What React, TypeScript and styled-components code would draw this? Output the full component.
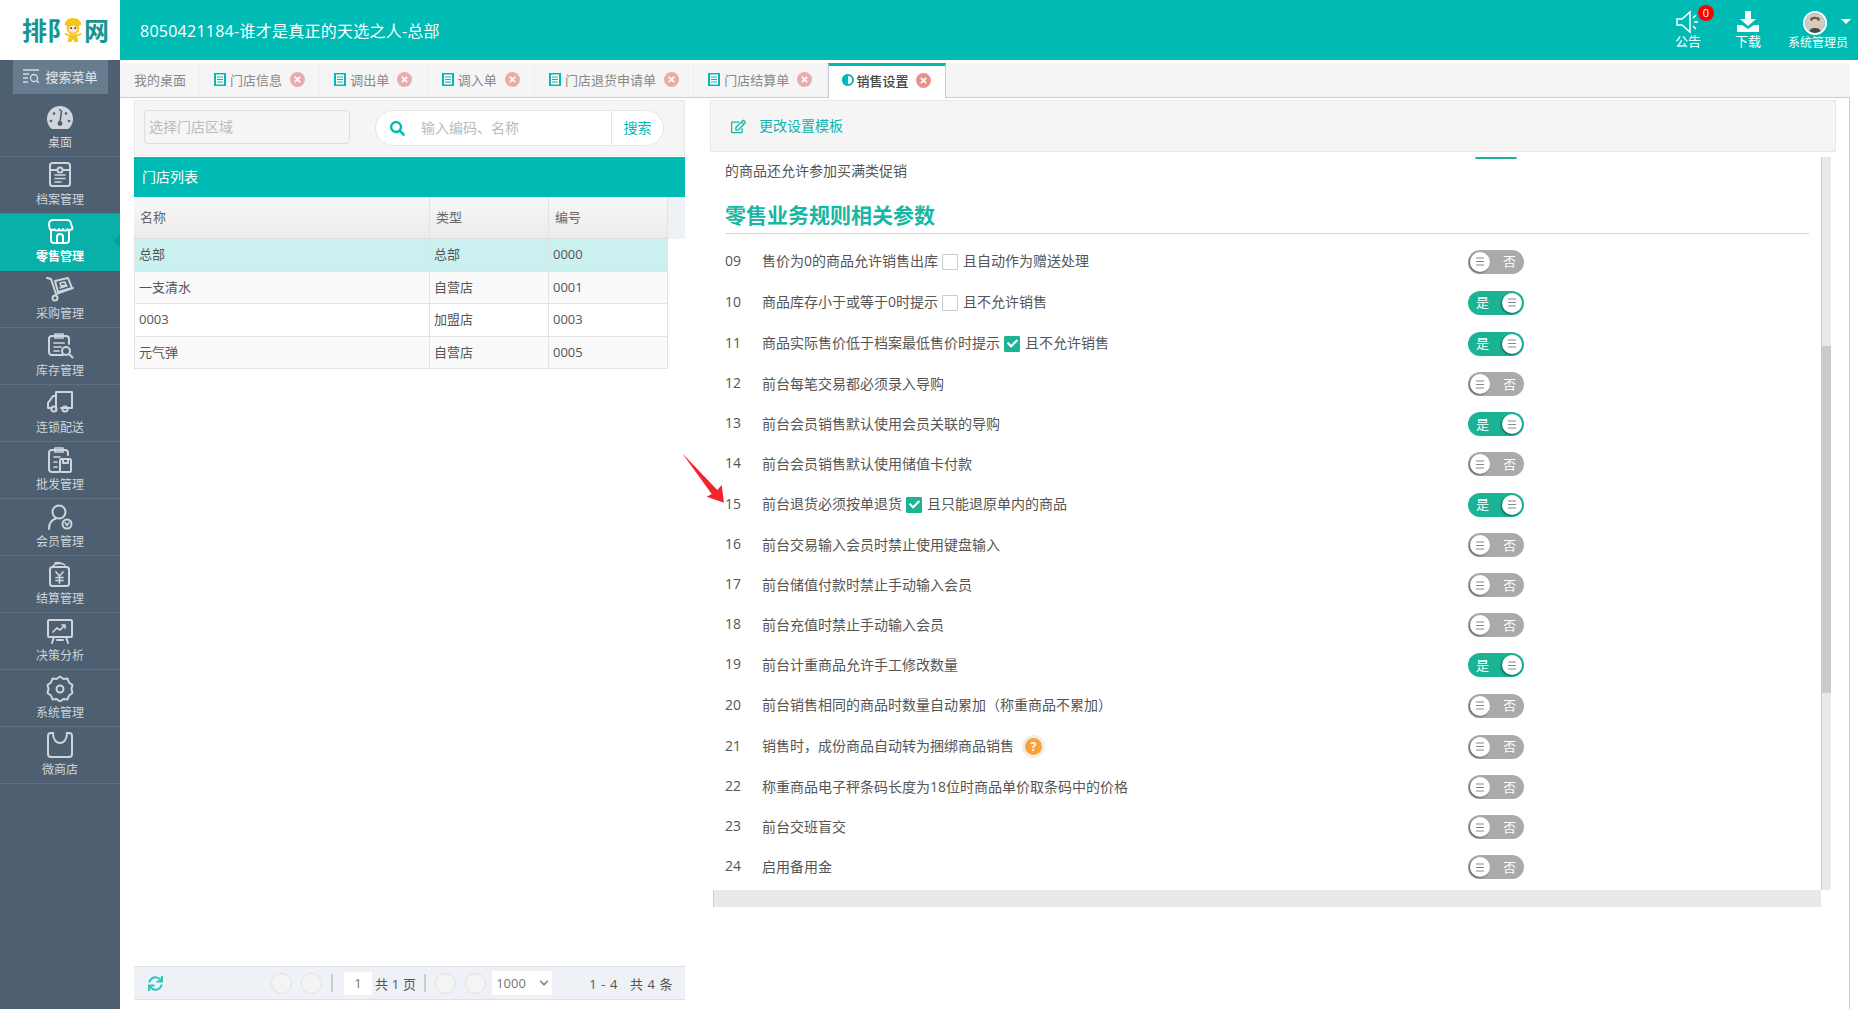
import React from 'react';
import styled, { createGlobalStyle } from 'styled-components';
import { FaCheck, FaRegEdit, FaSearch, FaSync, FaTimes } from 'react-icons/fa';
import { ChevronDown } from 'lucide-react';

const TEAL = '#00bbb4';
const GREEN = '#1ab394';
const FONT = `"Open Sans", "Noto Sans CJK SC", sans-serif`;

const navIcons: Record<string, React.ReactNode> = {
  desk: (
    <>
      <path d="M5.7 24A13 13 0 1 1 22.3 24z" fill="currentColor" stroke="none" />
      <path d="M15.5 6l-1.500 11" stroke="#4d5f70" strokeWidth="1.6" />
      <circle cx="14" cy="18.5" r="2.4" fill="#4d5f70" stroke="none" />
      <g fill="#4d5f70" stroke="none">
        <circle cx="5" cy="16" r="1.3" /><circle cx="8" cy="8.5" r="1.3" /><circle cx="14" cy="5" r="1" /><circle cx="23" cy="16" r="1.3" /><circle cx="20" cy="8.5" r="1.3" />
      </g>
    </>
  ),
  file: (
    <>
      <rect x="4" y="1" width="20" height="23" rx="2.5" />
      <path d="M4 8h7M17 8h7" /><circle cx="14" cy="8" r="2.6" />
      <path d="M9 13h10M9 16.5h10M9 20h6" strokeWidth="1.6" />
    </>
  ),
  shop: (
    <>
      <path d="M7 1h14a4 4 0 0 1 4 4l1.500 4c0 2-5 3-5 1 0 2-4.500 2-4.500 0 0 2-4 2-4 0 0 2-4.500 2-4.500 0 0 2-5 1-5-1L3 5a4 4 0 0 1 4-4z" />
      <path d="M5 12v9a3 3 0 0 0 3 3h12a3 3 0 0 0 3-3v-9" />
      <path d="M11 24v-6a3 3 0 0 1 6 0v6" />
    </>
  ),
  buy: (
    <>
      <path d="M1 2l4 1 5 15 17-6" /><circle cx="9" cy="22" r="2.5" />
      <path d="M9 5l13-3 4 10-14 4z" /><path d="M14 7l5-1 1 3-5 1zM14 12l7-2" strokeWidth="1.6" />
    </>
  ),
  stock: (
    <>
      <path d="M17 22H6a3 3 0 0 1-3-3V6a3 3 0 0 1 3-3h14a3 3 0 0 1 3 3v5" />
      <path d="M9 1h8v4H9zM8 10h10M8 14h7M8 18h5" strokeWidth="1.7" />
      <circle cx="20" cy="18" r="4" /><path d="M23 21l3.500 3.500" />
    </>
  ),
  truck: (
    <>
      <path d="M10 19V2h16v15" /><path d="M26 18H15" />
      <path d="M10 6H7L2 13v5h3" /><circle cx="8" cy="19" r="2.6" /><circle cx="19" cy="19" r="2.6" />
    </>
  ),
  batch: (
    <>
      <path d="M22 8V6a3 3 0 0 0-3-3H6a3 3 0 0 0-3 3v16a3 3 0 0 0 3 3h7" />
      <path d="M9 1h8v4H9zM8 10h6M8 15h3M8 20h3" strokeWidth="1.7" />
      <rect x="14" y="12" width="11" height="13" rx="1.5" /><path d="M17 12v4h5v-4" />
    </>
  ),
  member: (
    <>
      <circle cx="13" cy="8" r="6.5" />
      <path d="M3 25c0-6 3-9.500 7-10.500" />
      <circle cx="21" cy="20" r="4.5" />
      <path d="M19 18.500l2 3 2-3" strokeWidth="1.5" />
    </>
  ),
  settle: (
    <>
      <rect x="4" y="6" width="19" height="19" rx="2.5" />
      <path d="M7 5c2-3 10-3 12-1M9 2c3-1 8 0 10 2" strokeWidth="1.5" />
      <path d="M10 11l3.500 4 3.500-4M13.500 15v7M10 16.500h7M10 19.500h7" strokeWidth="1.7" />
    </>
  ),
  chart: (
    <>
      <rect x="2" y="2" width="24" height="17" rx="1" />
      <path d="M7 14l4-4 3 2 5-5M16 7h3v3" strokeWidth="1.7" />
      <path d="M8 19l-2 6M20 19l2 6M11 22h6" />
    </>
  ),
  system: (
    <>
      <path d="M14 1.500l3.500 2.500 4-.500 1.500 4 3.500 2.500-1 4 1 4-3.500 2.500-1.500 4-4-.500L14 26.500 10.500 24l-4 .500-1.500-4L1.500 18l1-4-1-4L5 7.500l1.500-4 4 .500z" />
      <circle cx="14" cy="14" r="3.5" />
    </>
  ),
  wechat: (
    <>
      <path d="M7 1H5a3 3 0 0 0-3 3v18a3 3 0 0 0 3 3h18a3 3 0 0 0 3-3V4a3 3 0 0 0-3-3h-2" />
      <path d="M7 1c0 6 3 10 7 10s7-4 7-10" />
    </>
  ),
};

const navItems = [
  { key: 'desk', label: '桌面' },
  { key: 'file', label: '档案管理' },
  { key: 'shop', label: '零售管理', active: true },
  { key: 'buy', label: '采购管理' },
  { key: 'stock', label: '库存管理' },
  { key: 'truck', label: '连锁配送' },
  { key: 'batch', label: '批发管理' },
  { key: 'member', label: '会员管理' },
  { key: 'settle', label: '结算管理' },
  { key: 'chart', label: '决策分析' },
  { key: 'system', label: '系统管理' },
  { key: 'wechat', label: '微商店' },
];

const tabs = [
  { label: '门店信息' },
  { label: '调出单' },
  { label: '调入单' },
  { label: '门店退货申请单' },
  { label: '门店结算单' },
];

const stores = [
  { name: '总部', type: '总部', code: '0000' },
  { name: '一支清水', type: '自营店', code: '0001' },
  { name: '0003', type: '加盟店', code: '0003' },
  { name: '元气弹', type: '自营店', code: '0005' },
];

type Setting = {
  no: string;
  text: string;
  on?: boolean;
  tall?: boolean;
  check?: { checked: boolean; text: string };
  help?: boolean;
};

const settings: Setting[] = [
  { no: '09', text: '售价为0的商品允许销售出库', tall: true, check: { checked: false, text: '且自动作为赠送处理' } },
  { no: '10', text: '商品库存小于或等于0时提示', on: true, tall: true, check: { checked: false, text: '且不允许销售' } },
  { no: '11', text: '商品实际售价低于档案最低售价时提示', on: true, tall: true, check: { checked: true, text: '且不允许销售' } },
  { no: '12', text: '前台每笔交易都必须录入导购' },
  { no: '13', text: '前台会员销售默认使用会员关联的导购', on: true },
  { no: '14', text: '前台会员销售默认使用储值卡付款' },
  { no: '15', text: '前台退货必须按单退货', on: true, tall: true, check: { checked: true, text: '且只能退原单内的商品' } },
  { no: '16', text: '前台交易输入会员时禁止使用键盘输入' },
  { no: '17', text: '前台储值付款时禁止手动输入会员' },
  { no: '18', text: '前台充值时禁止手动输入会员' },
  { no: '19', text: '前台计重商品允许手工修改数量', on: true },
  { no: '20', text: '前台销售相同的商品时数量自动累加（称重商品不累加）', tall: true },
  { no: '21', text: '销售时，成份商品自动转为捆绑商品销售', tall: true, help: true },
  { no: '22', text: '称重商品电子秤条码长度为18位时商品单价取条码中的价格' },
  { no: '23', text: '前台交班盲交' },
  { no: '24', text: '启用备用金' },
];

const TabIcon = () => (
  <svg width="12" height="13" viewBox="0 0 12 13">
    <rect width="12" height="13" fill={TEAL} />
    <rect x="2" y="1.5" width="8" height="10" fill="#fff" />
    <path d="M3 4h6M3 6.500h6M3 9h6" stroke={TEAL} strokeWidth="1" />
  </svg>
);

const CloseBadge = ({ active }: { active?: boolean }) => (
  <CloseCircle $active={active}>
    <FaTimes size={9} />
  </CloseCircle>
);

const Toggle = ({ on }: { on?: boolean }) => (
  <ToggleTrack $on={on}>
    <ToggleKnob>
      <svg width="10" height="9" viewBox="0 0 10 9">
        <path d="M1 1h8M1 4.500h8M1 8h8" stroke="#888" strokeWidth="1" />
      </svg>
    </ToggleKnob>
    <ToggleText>{on ? '是' : '否'}</ToggleText>
  </ToggleTrack>
);

const App: React.FC = () => (
  <Page>
    <GlobalStyle />
    <Header>
      <LogoBox>
        <LogoText $gap={-10}>排阝</LogoText>
        <svg width="22" height="26" viewBox="0 0 24 28">
          <path d="M3 9c0-5 4-8 9-8s9 3 9 8z" fill="#f5c518" />
          <circle cx="12" cy="12" r="7" fill="#f5c518" />
          <ellipse cx="12" cy="13" rx="5" ry="4" fill="#f7e3cf" />
          <circle cx="10" cy="12" r="1" fill="#333" />
          <circle cx="14.5" cy="12" r="1" fill="#333" />
          <path d="M8 19h8l2 8h-4l-2-3-2 3H6z" fill="#f5c518" />
          <path d="M8 20l-5-2M16 20l5-2" stroke="#f5c518" strokeWidth="2" />
        </svg>
        <LogoText $gap={0}>网</LogoText>
      </LogoBox>
      <Title>8050421184-谁才是真正的天选之人-总部</Title>
      <HeaderActions>
        <HeaderAction $width={60}>
          <svg width="24" height="24" viewBox="0 0 24 24" fill="none" stroke="#fff" strokeWidth="1.5">
            <path d="M1 9h5l8-7v20l-8-7H1z" />
            <path d="M17 8l3-3M18 12h4M17 16l3 3" />
          </svg>
          <Badge>0</Badge>
          <HeaderLabel>公告</HeaderLabel>
        </HeaderAction>
        <HeaderAction $width={60}>
          <svg width="24" height="24" viewBox="0 0 24 24" fill="#fff">
            <path d="M9 1h6v8h5l-8 7-8-7h5z" />
            <path d="M1 15h5l6 4 6-4h5v7H1z" />
          </svg>
          <HeaderLabel>下载</HeaderLabel>
        </HeaderAction>
        <UserAction>
          <AvatarRow>
            <Avatar>
              <svg width="20" height="20" viewBox="0 0 20 20">
                <circle cx="10" cy="10" r="10" fill="#cfcac4" />
                <path d="M5 6c1-3 9-3 10 0l-1 2H6z" fill="#6b5a48" />
                <ellipse cx="10" cy="10" rx="3.5" ry="4" fill="#e6c9ad" />
                <path d="M4 20c0-4 3-5 6-5s6 1 6 5z" fill="#4a4a4a" />
              </svg>
            </Avatar>
            <Caret />
          </AvatarRow>
          <UserLabel>系统管理员</UserLabel>
        </UserAction>
      </HeaderActions>
    </Header>
    <Body>
      <Sidebar>
        <SearchMenu>
          <svg width="17" height="15" viewBox="0 0 17 15" fill="none" stroke="#d5dbe0" strokeWidth="1.3">
            <path d="M0 1h16M0 5h6M0 9h5M0 13h5" />
            <circle cx="11" cy="9" r="3.5" />
            <path d="M13.500 11.500l2.500 2.500" />
          </svg>
          搜索菜单
        </SearchMenu>
        <NavList>
          {navItems.map((item) => (
            <NavItem key={item.key} $active={item.active}>
              <svg width="28" height="27" viewBox="0 0 28 27" fill="none" stroke="currentColor" strokeWidth="2" strokeLinejoin="round" strokeLinecap="round">
                {navIcons[item.key]}
              </svg>
              <NavLabel $active={item.active}>{item.label}</NavLabel>
              {item.active && <ActiveCaret />}
            </NavItem>
          ))}
        </NavList>
      </Sidebar>
      <Main>
        <TabStrip>
          <HomeTab>我的桌面</HomeTab>
          {tabs.map((tab) => (
            <Tab key={tab.label}>
              <TabIcon />
              {tab.label}
              <CloseBadge />
            </Tab>
          ))}
          <ActiveTab>
            <svg width="12" height="12" viewBox="0 0 12 12">
              <circle cx="6" cy="6" r="5" fill="#fff" stroke={TEAL} strokeWidth="2" />
              <path d="M6 0a6 6 0 0 0 0 12z" fill={TEAL} />
            </svg>
            销售设置
            <CloseBadge active />
          </ActiveTab>
        </TabStrip>
        <Content>
          <LeftPanel>
            <StoreSearch>
              <AreaSelect>选择门店区域</AreaSelect>
              <SearchPill>
                <SearchIconWrap>
                  <FaSearch size={15} />
                </SearchIconWrap>
                <SearchHint>输入编码、名称</SearchHint>
                <SearchButton>搜索</SearchButton>
              </SearchPill>
            </StoreSearch>
            <PanelTitle>门店列表</PanelTitle>
            <TableHead>
              <HeadCell $width={296}>名称</HeadCell>
              <HeadCell $width={119}>类型</HeadCell>
              <HeadCell $width={119}>编号</HeadCell>
            </TableHead>
            <StoreRows>
              {stores.map((store, i) => (
                <StoreRow key={store.code} $selected={i === 0} $striped={i % 2 === 1} $tall={i % 2 === 0}>
                  <StoreCell $width={295}>{store.name}</StoreCell>
                  <StoreCell $width={119}>{store.type}</StoreCell>
                  <StoreCell $width={119}>{store.code}</StoreCell>
                </StoreRow>
              ))}
            </StoreRows>
            <Pager>
              <RefreshWrap>
                <FaSync size={15} />
              </RefreshWrap>
              <PagerControls>
                <PageCircle />
                <PageCircle />
                <PagerSep />
                <PageInput>1</PageInput>
                <PageTotal>共 1 页</PageTotal>
                <PagerSep />
                <PageCircle />
                <PageCircle />
                <PageSize>
                  1000
                  <ChevronDown size={14} strokeWidth={3} color="#888" />
                </PageSize>
              </PagerControls>
              <PageCount>1 - 4&nbsp;&nbsp;&nbsp;共 4 条</PageCount>
            </Pager>
          </LeftPanel>
          <RightPanel>
            <Toolbar>
              <FaRegEdit size={15} />
              <ToolbarLabel>更改设置模板</ToolbarLabel>
            </Toolbar>
            <ScrollArea>
              <ScrollContent>
                <ClippedToggle />
                <WrappedLine>的商品还允许参加买满类促销</WrappedLine>
                <SectionTitle>零售业务规则相关参数</SectionTitle>
                {settings.map((row) => (
                  <SettingRow key={row.no} $tall={row.tall}>
                    <RowNo>{row.no}</RowNo>
                    <RowText>
                      {row.text}
                      {row.check && (
                        <>
                          <CheckBox $checked={row.check.checked}>
                            {row.check.checked && <FaCheck size={11} color="#fff" />}
                          </CheckBox>
                          {row.check.text}
                        </>
                      )}
                      {row.help && <HelpDot>?</HelpDot>}
                    </RowText>
                    <Toggle on={row.on} />
                  </SettingRow>
                ))}
              </ScrollContent>
              <VerticalBar>
                <VerticalThumb />
              </VerticalBar>
            </ScrollArea>
            <HorizontalBar />
            <Annotation width="55" height="60" viewBox="0 0 55 60">
              <path d="M7 3L42.300 40l4.400-5L49 52.700 31.700 46.700l5-2.700z" fill="#f5232b" />
            </Annotation>
          </RightPanel>
        </Content>
      </Main>
    </Body>
  </Page>
);

const GlobalStyle = createGlobalStyle`
  * {
    box-sizing: border-box;
  }

  html, body, #root {
    margin: 0;
    height: 100%;
  }

  body {
    font-family: ${FONT};
    font-size: 14px;
    color: #555;
    background: #fff;
    overflow: hidden;
  }
`;

const Page = styled.div`
  display: flex;
  flex-direction: column;
  width: 1858px;
  height: 1009px;
  overflow: hidden;
`;

const Header = styled.header`
  display: flex;
  align-items: center;
  flex: 0 0 60px;
  background: ${TEAL};
  color: #fff;
`;

const LogoBox = styled.div`
  display: flex;
  align-items: center;
  align-self: stretch;
  width: 120px;
  padding-left: 22px;
  background: #fff;
`;

const LogoText = styled.span<{ $gap: number }>`
  margin-right: ${(p) => p.$gap}px;
  font-size: 25px;
  font-weight: 700;
  line-height: 1;
  white-space: nowrap;
  color: #17958f;
`;

const Title = styled.div`
  margin: -1px 0 0 20px;
  font-size: 16px;
  letter-spacing: 0.25px;
`;

const HeaderActions = styled.div`
  display: flex;
  align-items: flex-start;
  margin-left: auto;
  padding-right: 10px;
  height: 100%;
`;

const HeaderAction = styled.div<{ $width: number }>`
  position: relative;
  display: flex;
  flex-direction: column;
  align-items: center;
  width: ${(p) => p.$width}px;
  padding-top: 10px;
`;

const HeaderLabel = styled.span`
  font-size: 13px;
  line-height: 16px;
  margin-top: -1px;
`;

const Badge = styled.span`
  position: absolute;
  top: 5px;
  left: 40px;
  width: 16px;
  height: 16px;
  border-radius: 50%;
  background: #f00;
  color: #fff;
  font-size: 11px;
  line-height: 16px;
  text-align: center;
`;

const UserAction = styled.div`
  display: flex;
  flex-direction: column;
  align-items: center;
  width: 60px;
  margin-left: 10px;
  padding-top: 11px;
`;

const AvatarRow = styled.div`
  display: flex;
  align-items: center;
  gap: 14px;
  margin-left: 18px;
`;

const Avatar = styled.div`
  display: flex;
  width: 24px;
  height: 24px;
  border: 2px solid #fff;
  border-radius: 50%;
  overflow: hidden;
`;

const Caret = styled.span`
  width: 0;
  height: 0;
  margin-bottom: 4px;
  border-left: 5px solid transparent;
  border-right: 5px solid transparent;
  border-top: 5px solid #fff;
`;

const UserLabel = styled.span`
  font-size: 12px;
  line-height: 16px;
  white-space: nowrap;
`;

const Body = styled.div`
  display: flex;
  flex: 1;
  min-height: 0;
`;

const Sidebar = styled.aside`
  flex: 0 0 120px;
  background: #4d5f70;
  color: #cfd5da;
`;

const SearchMenu = styled.div`
  display: flex;
  align-items: center;
  justify-content: center;
  gap: 5px;
  width: 95px;
  height: 34px;
  margin-left: 13px;
  padding-bottom: 1px;
  background: #687c90;
  color: #e6eaee;
  font-size: 13px;
`;

const NavList = styled.nav`
  margin-top: 6px;
`;

const NavItem = styled.div<{ $active?: boolean }>`
  position: relative;
  display: flex;
  flex-direction: column;
  align-items: center;
  height: 57px;
  padding-top: 5px;
  border-bottom: 1px solid ${(p) => (p.$active ? '#08b0a8' : '#5f7080')};
  background: ${(p) => (p.$active ? '#08b0a8' : 'transparent')};
  color: ${(p) => (p.$active ? '#fff' : '#cfd5da')};
`;

const NavLabel = styled.span<{ $active?: boolean }>`
  font-size: 12px;
  line-height: 17px;
  margin-top: 2px;
  font-weight: ${(p) => (p.$active ? 700 : 400)};
`;

const ActiveCaret = styled.span`
  position: absolute;
  right: 0;
  top: 20px;
  width: 0;
  height: 0;
  border-top: 7px solid transparent;
  border-bottom: 7px solid transparent;
  border-right: 6px solid #0a9d97;
`;

const Main = styled.main`
  display: flex;
  flex-direction: column;
  flex: 1;
  min-width: 0;
  padding: 3px 8px 0 0;
`;

const TabStrip = styled.div`
  display: flex;
  flex: 0 0 35px;
  background: #f5f5f5;
  border-bottom: 1px solid #c8ced3;
`;

const Tab = styled.div`
  display: flex;
  align-items: center;
  gap: 4px;
  padding: 0 14.3px 2px 14px;
  border-right: 1px solid #eeeeee;
  font-size: 13px;
  color: #888;
  white-space: nowrap;
`;

const HomeTab = styled(Tab)`
  padding-right: 13px;
`;

const ActiveTab = styled(Tab)`
  margin-bottom: -1px;
  padding: 0 14px 4px 13px;
  gap: 3px;
  background: #fff;
  border-top: 3px solid ${TEAL};
  border-left: 1px solid #c8ced3;
  border-right: 1px solid #c8ced3;
  color: #444;
  font-weight: 500;
`;

const CloseCircle = styled.span<{ $active?: boolean }>`
  display: flex;
  align-items: center;
  justify-content: center;
  width: 15px;
  height: 15px;
  margin-left: 4px;
  border-radius: 50%;
  background: ${(p) => (p.$active ? '#ec8f8f' : '#e9abab')};
  color: #fff;
`;

const Content = styled.div`
  display: flex;
  flex: 1;
  min-height: 0;
  padding: 2px 0 9px 14px;
  border-right: 1px solid #c8ced3;
`;

const LeftPanel = styled.section`
  display: flex;
  flex-direction: column;
  flex: 0 0 551px;
`;

const StoreSearch = styled.div`
  display: flex;
  align-items: flex-start;
  gap: 25px;
  flex: 0 0 56px;
  padding: 9px;
  background: #f5f5f5;
  border: 1px solid #e8e8e8;
`;

const AreaSelect = styled.div`
  width: 206px;
  height: 34px;
  padding: 0 4px;
  border: 1px solid #ddd;
  border-radius: 4px;
  color: #bbb;
  font-size: 14px;
  line-height: 32px;
`;

const SearchPill = styled.div`
  display: flex;
  align-items: center;
  width: 289px;
  height: 36px;
  background: #fff;
  border: 1px solid #e5e5e5;
  border-radius: 18px;
`;

const SearchIconWrap = styled.span`
  display: flex;
  margin-left: 14px;
  color: ${TEAL};
`;

const SearchHint = styled.span`
  flex: 1;
  margin: -2px 0 0 16px;
  color: #bbb;
  font-size: 14px;
`;

const SearchButton = styled.span`
  align-self: stretch;
  width: 52px;
  border-left: 1px solid #e5e5e5;
  color: ${TEAL};
  font-size: 14px;
  line-height: 34px;
  text-align: center;
`;

const PanelTitle = styled.div`
  flex: 0 0 40px;
  margin-top: 1px;
  padding-left: 8px;
  background: ${TEAL};
  color: #fff;
  font-size: 14px;
  line-height: 40px;
`;

const TableHead = styled.div`
  display: flex;
  flex: 0 0 42px;
  background: #eef1f5;
`;

const HeadCell = styled.div<{ $width: number }>`
  flex: 0 0 ${(p) => p.$width}px;
  padding-left: 6px;
  background: linear-gradient(#f8f8f8, #ebebeb);
  border-right: 1px solid #e2e2e2;
  border-bottom: 1px solid #ddd;
  color: #666;
  font-size: 13px;
  line-height: 41px;
`;

const StoreRows = styled.div`
  flex: 1;
  width: 534px;
`;

const StoreRow = styled.div<{ $selected?: boolean; $striped?: boolean; $tall?: boolean }>`
  display: flex;
  height: ${(p) => (p.$tall ? 33 : 32)}px;
  background: ${(p) => (p.$selected ? '#caf0ef' : p.$striped ? '#f9f9f9' : '#fff')};
  border-bottom: 1px solid #e3e3e3;
  border-left: 1px solid #e3e3e3;
`;

const StoreCell = styled.div<{ $width: number }>`
  flex: 0 0 ${(p) => p.$width}px;
  padding-left: 4px;
  border-right: 1px solid #e3e3e3;
  color: #555;
  font-size: 13px;
  line-height: 31px;
`;

const Pager = styled.div`
  display: flex;
  align-items: center;
  flex: 0 0 34px;
  padding-left: 14px;
  background: #eef1f5;
  border-top: 1px solid #dfe1e3;
  border-bottom: 1px solid #dfe1e3;
`;

const RefreshWrap = styled.span`
  display: flex;
  color: #2bc6bd;
`;

const PagerControls = styled.div`
  display: flex;
  align-items: center;
  gap: 9px;
  margin-left: 108px;
`;

const PageCircle = styled.span`
  width: 21px;
  height: 21px;
  background: #f4f4f4;
  border: 1px solid #e0e0e0;
  border-radius: 50%;
`;

const PagerSep = styled.span`
  width: 2px;
  height: 18px;
  background: #c9ced3;
`;

const PageInput = styled.span`
  width: 28px;
  height: 23px;
  margin-left: 2px;
  background: #fff;
  color: #777;
  font-size: 13px;
  line-height: 23px;
  text-align: center;
`;

const PageTotal = styled.span`
  margin: 0 -1px 0 -6px;
  color: #555;
  font-size: 13px;
  letter-spacing: 0.2px;
  white-space: nowrap;
`;

const PageSize = styled.span`
  display: flex;
  align-items: center;
  justify-content: space-between;
  width: 60px;
  height: 24px;
  margin-left: -3px;
  padding: 0 1px 0 4px;
  background: #fff;
  color: #777;
  font-size: 13px;
`;

const PageCount = styled.span`
  margin-left: 37px;
  color: #555;
  font-size: 13px;
  letter-spacing: 0.6px;
  white-space: nowrap;
`;

const RightPanel = styled.section`
  position: relative;
  flex: 0 0 1126px;
  margin-left: 25px;
`;

const Toolbar = styled.div`
  display: flex;
  align-items: center;
  gap: 13px;
  height: 52px;
  padding-left: 20px;
  background: #f5f5f5;
  border: 1px solid #e8e8e8;
  color: #14b3ab;
  font-size: 14px;
`;

const ToolbarLabel = styled.span`
  margin-top: -2px;
`;

const ScrollArea = styled.div`
  display: flex;
  height: 733px;
  margin: 5px 0 0 3px;
`;

const ScrollContent = styled.div`
  width: 1108px;
  padding-left: 12px;
  overflow: hidden;
`;

const ClippedToggle = styled.div`
  width: 42px;
  height: 2px;
  margin-left: 750px;
  background: ${GREEN};
  border-radius: 0 0 12px 12px;
`;

const WrappedLine = styled.div`
  height: 24px;
  line-height: 24px;
  color: #555;
  font-size: 14px;
`;

const SectionTitle = styled.h3`
  width: 1084px;
  height: 31px;
  margin: 20px 0 7px;
  border-bottom: 1px solid #d5dccf;
  color: #17b6a5;
  font-size: 21px;
  font-weight: 700;
  line-height: 24px;
`;

const SettingRow = styled.div<{ $tall?: boolean }>`
  display: grid;
  grid-template-columns: 37px 706px 56px;
  align-items: center;
  height: ${(p) => (p.$tall ? 41 : 40)}px;
`;

const RowNo = styled.span`
  padding-bottom: 3px;
  color: #555;
  font-size: 14px;
`;

const RowText = styled.div`
  display: flex;
  align-items: center;
  padding-bottom: 3px;
  color: #555;
  font-size: 14px;
`;

const CheckBox = styled.span<{ $checked?: boolean }>`
  display: flex;
  align-items: center;
  justify-content: center;
  width: 16px;
  height: 16px;
  margin: 3px 5px 0 4px;
  background: ${(p) => (p.$checked ? GREEN : '#fff')};
  border: 1px solid ${(p) => (p.$checked ? GREEN : '#ccc')};
  border-radius: 1px;
`;

const HelpDot = styled.span`
  width: 23px;
  height: 23px;
  margin: 3px 0 0 8px;
  background: #f8a23c;
  border: 3px solid #eeeeee;
  border-radius: 50%;
  color: #fff;
  font-size: 12px;
  font-weight: 700;
  line-height: 17px;
  text-align: center;
`;

const ToggleTrack = styled.div<{ $on?: boolean }>`
  display: flex;
  flex-direction: ${(p) => (p.$on ? 'row-reverse' : 'row')};
  align-items: center;
  justify-content: space-between;
  width: 56px;
  height: 24px;
  padding: ${(p) => (p.$on ? '0 2px 0 8px' : '0 8px 0 2px')};
  background: ${(p) => (p.$on ? GREEN : '#aaaaaa')};
  border-radius: 12px;
`;

const ToggleKnob = styled.span`
  display: flex;
  align-items: center;
  justify-content: center;
  width: 20px;
  height: 20px;
  background: #fff;
  border-radius: 50%;
  box-shadow: -1px 1px 2px rgba(0, 0, 0, 0.45);
`;

const ToggleText = styled.span`
  color: #fff;
  font-size: 13px;
  line-height: 1;
`;

const VerticalBar = styled.div`
  flex: 0 0 10px;
  padding-top: 189px;
  background: #e9e9e9;
  border-left: 1px solid #ccc;
`;

const VerticalThumb = styled.div`
  height: 347px;
  margin-left: -1px;
  background: #cbcbcb;
`;

const HorizontalBar = styled.div`
  width: 1108px;
  height: 17px;
  margin-left: 3px;
  background: #e9e9e9;
  border-left: 1px solid #ccc;
`;

const Annotation = styled.svg`
  position: absolute;
  left: -35px;
  top: 350px;
`;

export default App;
